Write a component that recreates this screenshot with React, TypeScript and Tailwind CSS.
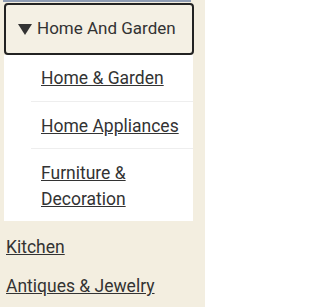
import React from 'react';

const subItems = ['Home & Garden', 'Home Appliances', 'Furniture & Decoration'];
const otherItems = ['Kitchen', 'Antiques & Jewelry'];

export default function App() {
  return (
    <div
      className="w-[205px] h-[307px] overflow-hidden bg-[#f3eee0] text-[#333]"
      style={{ fontFamily: 'Roboto, "Liberation Sans", sans-serif' }}
    >
      <div className="ml-[3px] w-[188px] h-[2px] bg-[#8e9cb3]" />
      <button className="mt-[1px] ml-[4px] w-[190px] h-[52px] border-2 border-[#222] rounded-[4px] bg-[#f4f0e4] flex items-center pl-[12px] text-[17px] text-[#333]">
        {/* caret */}
        <svg width="14" height="11" viewBox="0 0 14 11" className="mr-[5px] mt-[1px]">
          <polygon points="0,0 14,0 7,11" fill="#333" />
        </svg>
        Home And Garden
      </button>
      <div className="ml-[4px] w-[189px] bg-white pl-[27px] text-[17.5px] leading-[26px]">
        {subItems.map((item, i) => (
          <div
            key={item}
            className={i === 0 ? 'pl-[10px] pr-[12px] py-[10px]' : 'pl-[10px] pr-[12px] pt-[11px] pb-[9px] border-t border-[#eeeeee]'}
          >
            <a href="#" className="underline text-[#333]">
              {item}
            </a>
          </div>
        ))}
      </div>
      <div className="pl-[6px] pt-[13px] flex flex-col gap-[13px] text-[17.5px] leading-[26px]">
        {otherItems.map((item) => (
          <a key={item} href="#" className="underline text-[#333]">
            {item}
          </a>
        ))}
      </div>
    </div>
  );
}
